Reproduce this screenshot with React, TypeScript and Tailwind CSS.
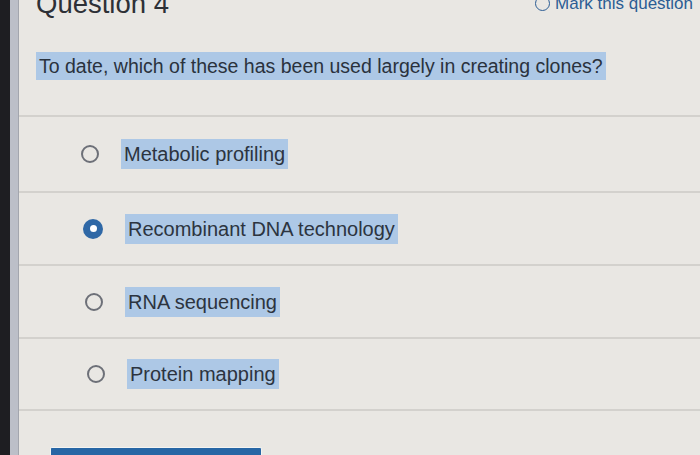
import { Fragment } from 'react'

const options = [
  { label: 'Metabolic profiling', selected: false, row: 'h-[76px] pl-[62px]' },
  { label: 'Recombinant DNA technology', selected: true, row: 'h-[73px] pl-[64px]' },
  { label: 'RNA sequencing', selected: false, row: 'h-[73px] pl-[66px]' },
  { label: 'Protein mapping', selected: false, row: 'h-[72px] pl-[68px]' },
]

function Radio({ selected }: { selected: boolean }) {
  if (selected) {
    return (
      <span className="flex h-[20px] w-[20px] shrink-0 items-center justify-center rounded-full bg-[#2f68a6]">
        <span className="h-[7px] w-[7px] rounded-full bg-white" />
      </span>
    )
  }
  return <span className="h-[18px] w-[18px] shrink-0 rounded-full border-2 border-[#6d7078]" />
}

export default function App() {
  return (
    <div
      className="flex h-[455px] w-[700px] overflow-hidden bg-[#e9e7e3]"
      style={{ fontFamily: '"Liberation Sans", Arial, sans-serif' }}
    >
      <div className="w-[10px] shrink-0 bg-[#1e1e22]" />
      <div className="w-[9px] shrink-0 border-r border-[#a3a6ae] bg-[#bcbfc8]" />

      <div className="flex min-w-0 flex-1 flex-col">
        {/* header + question */}
        <div className="h-[117px] shrink-0 border-b-2 border-[#d3d1cd]">
          <div className="-mt-[10px] flex items-start justify-between pl-[17px] pr-[7px]">
            <h1 className="text-[27.5px] leading-[27px] text-[#2d3036]">Question 4</h1>
            <button className="mt-[5px] flex items-center gap-[5px] text-[17px] leading-[17px] text-[#2c5d94]">
              <span className="h-[15px] w-[15px] rounded-full border-[1.5px] border-[#2c5d94]" />
              Mark this question
            </button>
          </div>
          <p className="ml-[17px] mt-[35px] inline-block bg-[#adc8e6] px-[3px] text-[19.5px] leading-[28px] text-[#2a323d]">
            To date, which of these has been used largely in creating clones?
          </p>
        </div>

        {options.map((o) => (
          <Fragment key={o.label}>
            <label className={`flex shrink-0 items-center gap-[22px] border-b-2 border-[#d3d1cd] ${o.row}`}>
              <Radio selected={o.selected} />
              <span className="bg-[#adc8e6] px-[3px] text-[20px] leading-[30px] text-[#2c3440]">
                {o.label}
              </span>
            </label>
          </Fragment>
        ))}

        <div className="flex flex-1 items-end pl-[31px]">
          <div className="h-[8px] w-[212px] rounded-t-[2px] border-x border-t border-[#f4f4f2] bg-[#2766a5]" />
        </div>
      </div>
    </div>
  )
}
